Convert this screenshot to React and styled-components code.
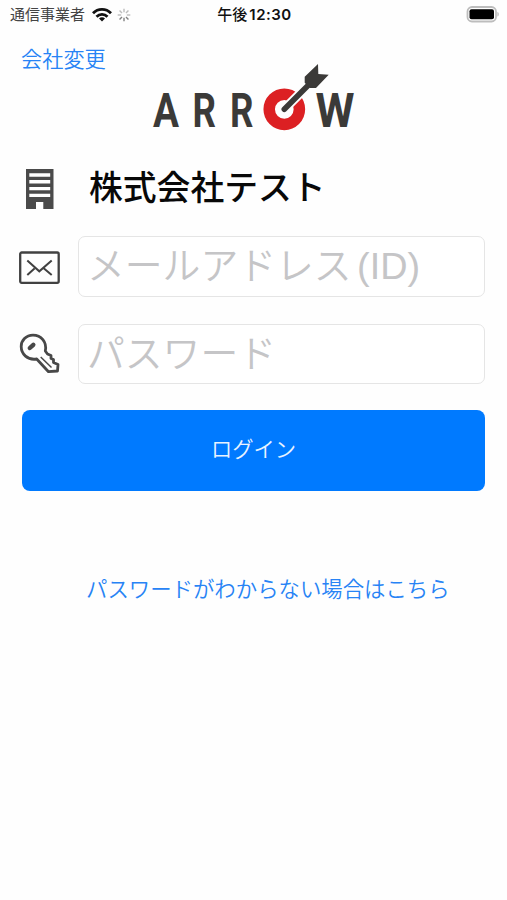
import React from "react";
import styled, { createGlobalStyle } from "styled-components";

const GlobalStyle = createGlobalStyle`
  * {
    box-sizing: border-box;
  }
  body {
    margin: 0;
    background: #fefefe;
    font-family: "Inter", "Noto Sans CJK JP", sans-serif;
  }
`;

const Screen = styled.main`
  width: 507px;
  height: 900px;
  background: #fefefe;
  overflow: hidden;
`;

const StatusBar = styled.div`
  display: grid;
  grid-template-columns: 1fr auto 1fr;
  align-items: center;
  height: 30px;
  padding: 0 8px 0 10px;
  font-size: 15px;
  line-height: 30px;
  color: #444;
`;

const Carrier = styled.div`
  display: flex;
  align-items: center;
  gap: 7px;
`;

const Spinner = styled.svg`
  margin-left: -2px;
`;

const Clock = styled.div`
  display: flex;
  gap: 2px;
  color: #111;
  font-weight: 600;
  letter-spacing: 0.5px;
`;

const Period = styled.span`
  font-weight: 500;
  letter-spacing: 0;
`;

const Battery = styled.svg`
  justify-self: end;
`;

const Header = styled.header`
  display: grid;
  grid-template-columns: 131px 204px;
  height: 119px;
  padding-left: 22px;
`;

const TextLink = styled.a`
  color: #2783f5;
  font-size: ${(props) => props.$size || 21.2}px;
  font-weight: 350;
  line-height: 30px;
  text-decoration: none;
  white-space: nowrap;
`;

const ChangeCompany = styled(TextLink)`
  margin: 14px 0 0 -1px;
`;

const Logo = styled.svg`
  margin-top: 33px;
  overflow: visible;
`;

const Form = styled.form`
  display: flex;
  flex-direction: column;
  padding: 0 22px;
`;

const Row = styled.div`
  display: grid;
  grid-template-columns: 36px 1fr;
  column-gap: 20px;
  align-items: center;
  height: ${(props) => props.$height}px;
  margin-bottom: ${(props) => props.$gap}px;
`;

const Icon = styled.svg`
  justify-self: center;
`;

const Company = styled.h1`
  margin: 0 0 3px 11px;
  font-size: 33.8px;
  line-height: 50px;
  font-weight: 500;
  color: #080808;
`;

const Field = styled.input`
  width: 100%;
  height: 100%;
  padding: 0 8px;
  border: 1.5px solid #e5e5e5;
  border-radius: 7px;
  outline: none;
  background: #fff;
  font-family: "Liberation Sans", "Noto Sans CJK JP", sans-serif;
  font-size: 37.8px;
  font-weight: 350;
  word-spacing: -5px;
  &::placeholder {
    color: #c5c5c7;
    opacity: 1;
  }
`;

const LoginButton = styled.button`
  height: 81px;
  padding: 0 0 6px;
  border: none;
  border-radius: 8px;
  background: #007aff;
  color: #e8f3ff;
  font-family: inherit;
  font-size: 21.3px;
  font-weight: 350;
  cursor: pointer;
`;

const Forgot = styled.div`
  margin: 83px 0 0 86px;
`;

const LETTERS = [
  { char: "A", x: 0, width: 26 },
  { char: "R", x: 39.5, width: 23.5 },
  { char: "R", x: 77, width: 23.5 },
  { char: "W", x: 162.5, width: 39 },
];

const SPOKES = [0, 45, 90, 135, 180, 225, 270, 315];

function ArrowLogo() {
  return (
    <Logo width="204" height="80" viewBox="0 0 204 80" role="img" aria-label="ARROW">
      <g fill="#3b3a38" fontFamily="Roboto, sans-serif" fontWeight="700" fontSize="48.5">
        {LETTERS.map((l, i) => (
          <text
            key={i}
            x={l.x}
            y="64.2"
            textLength={l.width}
            lengthAdjust="spacingAndGlyphs"
          >
            {l.char}
          </text>
        ))}
      </g>
      <circle cx="131.3" cy="46.3" r="15.1" fill="none" stroke="#dc2023" strokeWidth="11.5" />
      <path d="M131 46.500L158 19.500" stroke="#fefefe" strokeWidth="9.500" />
      <path d="M131.300 46.300L157 20.500" stroke="#3b3a38" strokeWidth="5.600" strokeLinecap="round" />
      <path d="M151.700 13.700L165 1L165.300 11L175.700 11.700L163 25H157L151.700 19.700Z" fill="#3b3a38" />
    </Logo>
  );
}

export default function App() {
  return (
    <>
      <GlobalStyle />
      <Screen>
        <StatusBar>
          <Carrier>
            <span>通信事業者</span>
            <svg width="20" height="16" viewBox="0 0 20 16" fill="none" stroke="#111" strokeWidth="2.8">
              <path d="M1 6.200C6 1 14 1 19 6.200" />
              <path d="M4.500 9.700C7.600 6.500 12.400 6.500 15.500 9.700" />
              <path d="M10 14.500L7 11.500C8.700 9.900 11.300 9.900 13 11.500Z" fill="#111" stroke="none" />
            </svg>
            <Spinner width="14" height="14" viewBox="-7 -7 14 14">
              {SPOKES.map((deg) => (
                <path
                  key={deg}
                  d="M0 -2.800V-6.300"
                  stroke={deg > 90 && deg < 270 ? "#808080" : "#bcbcbc"}
                  strokeWidth="1.400"
                  transform={`rotate(${deg})`}
                />
              ))}
            </Spinner>
          </Carrier>
          <Clock>
            <Period>午後</Period>
            <span>12:30</span>
          </Clock>
          <Battery width="33" height="18" viewBox="0 0 33 18">
            <rect x="1.500" y="1" width="28.500" height="14.500" rx="4.500" fill="#fff" stroke="#bdbdbd" strokeWidth="1.800" />
            <rect x="3.500" y="3.300" width="24.500" height="10" rx="2" fill="#000" />
            <path d="M31.500 6C33 6.500 33 10 31.500 10.500Z" fill="#aaa" />
          </Battery>
        </StatusBar>

        <Header>
          <ChangeCompany href="#">会社変更</ChangeCompany>
          <ArrowLogo />
        </Header>

        <Form onSubmit={(e) => e.preventDefault()}>
          <Row $height={80} $gap={7}>
            <Icon width="28" height="42" viewBox="0 0 28 42">
              <path d="M0 1H27.500V41H17.300V34H10V41H0Z" fill="#4a4a4a" />
              <path d="M3.300 7H24.200M3.300 13.800H24.200M3.300 20.600H24.200M3.300 27.400H24.200" stroke="#fefefe" strokeWidth="3.400" />
            </Icon>
            <Company>株式会社テスト</Company>
          </Row>
          <Row $height={61} $gap={27}>
            <Icon width="42" height="34" viewBox="0 0 42 34" fill="none" stroke="#414141" strokeWidth="2.300">
              <rect x="1.200" y="2.500" width="38.500" height="30.300" rx="1.500" />
              <path d="M8.300 10.500L20.300 21.300L32.700 10.500M8.300 25L15.500 18.500M32.700 25L25 18.500" strokeWidth="2" />
            </Icon>
            <Field type="email" placeholder="メールアドレス (ID)" />
          </Row>
          <Row $height={60} $gap={26}>
            <Icon width="42" height="42" viewBox="0 0 42 42" fill="none" stroke="#484848">
              <path
                d="M26.300 18C28.200 9 22 2.200 14 2.200C7 2.200 2.200 7.500 2.200 13.500C2.200 21 8.500 27.500 17.700 26L29.500 38.700L38.500 38L39 31.500L34.500 29.500V26.500L32 25.500V22.500L28.500 21Z"
                strokeWidth="2.800"
                strokeLinejoin="round"
              />
              <path d="M10.800 15L14.300 11.800" strokeWidth="4.400" strokeLinecap="round" />
              <path d="M21.700 24L32.500 34.500" strokeWidth="1.500" />
            </Icon>
            <Field type="password" placeholder="パスワード" />
          </Row>
          <LoginButton type="submit">ログイン</LoginButton>
        </Form>

        <Forgot>
          <TextLink href="#" $size={21.4}>パスワードがわからない場合はこちら</TextLink>
        </Forgot>
      </Screen>
    </>
  );
}
